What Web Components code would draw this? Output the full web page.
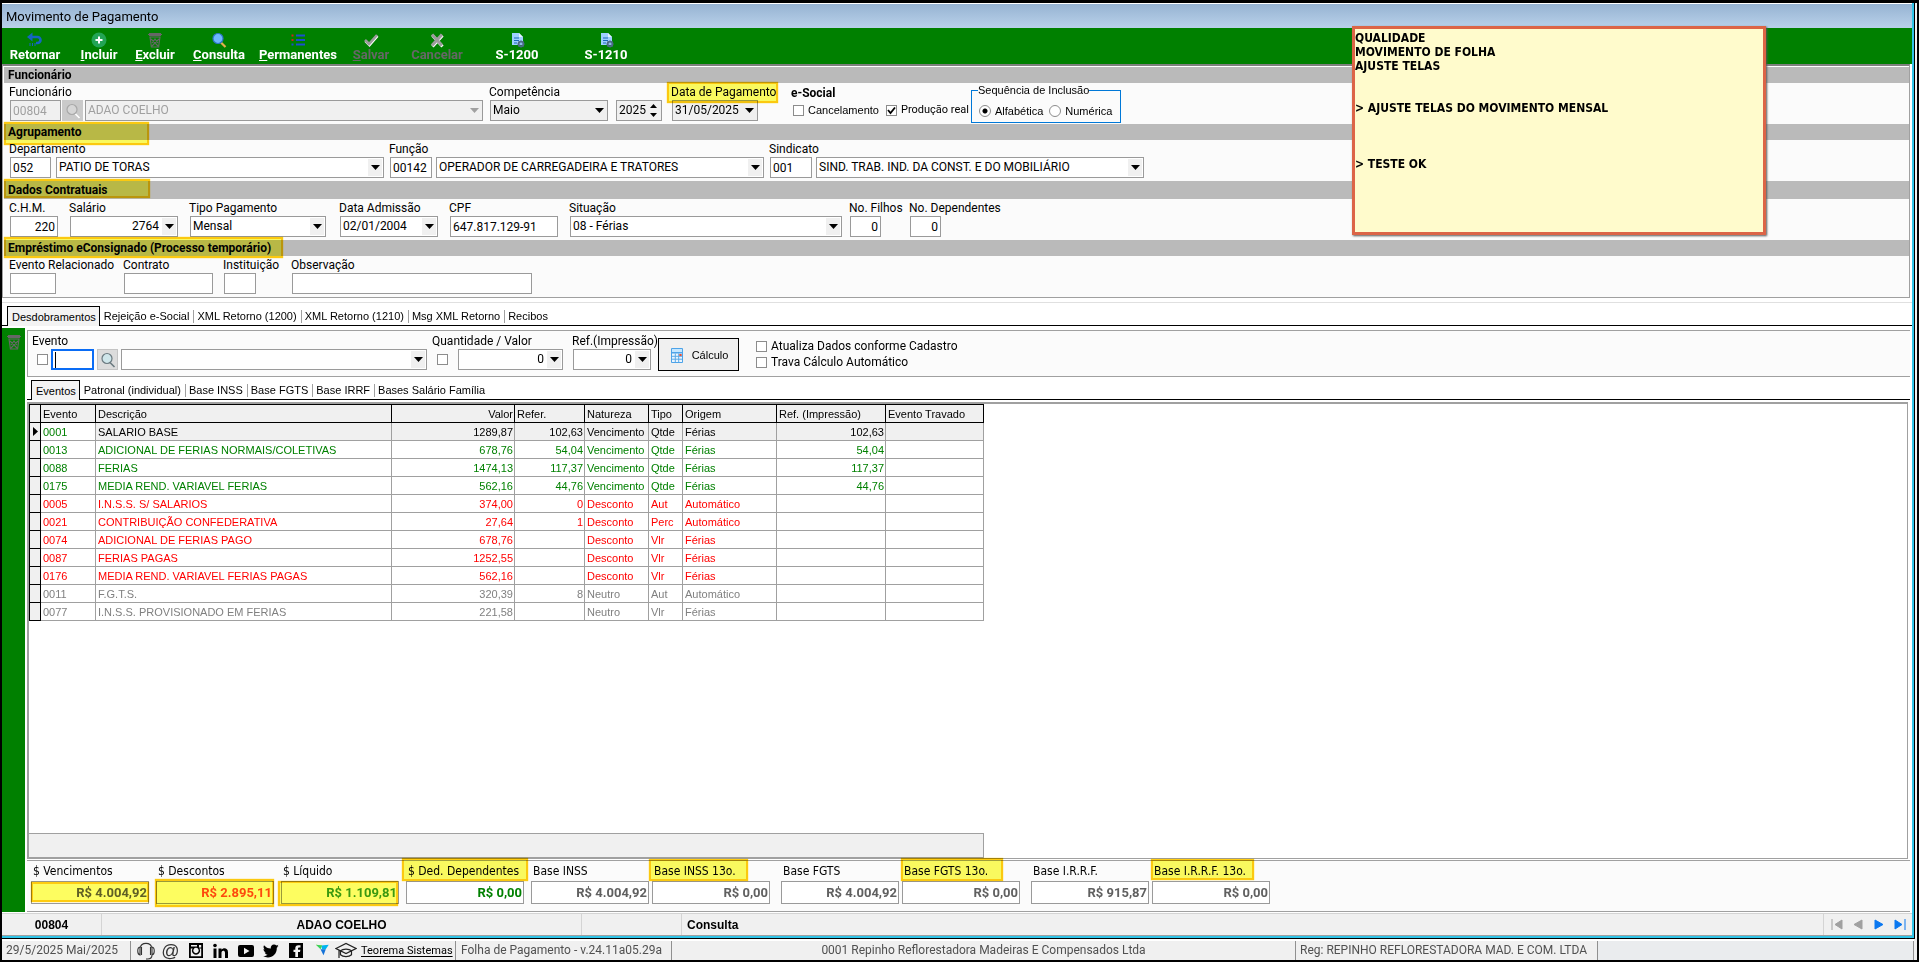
<!DOCTYPE html>
<html lang="pt-BR">
<head>
<meta charset="utf-8">
<title>Movimento de Pagamento</title>
<style>
html, body { margin: 0; height: 100%; }
body { font: 12px/14px Roboto, "Liberation Sans", sans-serif; color: #000; background: #000; }
</style>
</head>
<body>
<payroll-app></payroll-app>

<script>
const RESET = `
*, *::before, *::after { box-sizing: border-box; }
:host { box-sizing: border-box; }
:host([hidden]) { display: none; }
button, input, select { font: inherit; color: inherit; margin: 0; border-radius: 0; }
input:focus, select:focus, button:focus { outline: none; }
`;
let nextId = 0;

const define = (name, render) => customElements.define(name, class extends HTMLElement {
  connectedCallback() {
    if (this.shadowRoot) return;
    const t = document.createElement('template');
    t.innerHTML = render(this);
    this.attachShadow({ mode: 'open' }).appendChild(t.content.cloneNode(true));
  }
});

/* ---------- icons ---------- */
const TRASH = '<g fill="none" stroke="#666" stroke-width="1.1"><path d="M1 2.500h14M3 5h10l-1.400 10H4.400zM4 7l7 7M12 7l-7 7M5 11l3-4 3 4"/></g><path d="M2 1h12v3H2z" fill="#666"/>';
const DOC = '<path d="M3 1h7l4 4v8H3z" fill="#9fd0ff"/><path d="M10 1v4h4z" fill="#e4f3ff"/><path d="M5 6h5M5 8.500h5M5 11h3" stroke="#1c68b8" stroke-width="1.200"/><circle cx="12" cy="12" r="2.500" fill="none" stroke="#4c6a86" stroke-width="1.600"/><path d="M12 8.500v7M8.500 12h7M9.600 9.600l4.800 4.800M14.400 9.600l-4.800 4.800" stroke="#4c6a86" stroke-width="1"/><circle cx="12" cy="12" r="1.100" fill="#9fd0ff"/>';
const ICONS = {
  back: '<path d="M3 5h7.500a3 3 0 0 1 0 6H9" fill="none" stroke="#1565c0" stroke-width="2.600"/><path d="M0 5l5.500-4.500v9z" fill="#1565c0"/><path d="M3 11v3M5.500 11v3M8 11v3" stroke="#1565c0" stroke-width="1"/>',
  add: '<circle cx="8" cy="8" r="7.500" fill="#23a455"/><path d="M8 4.500v7M4.500 8h7" stroke="#fff" stroke-width="2"/>',
  trash: TRASH,
  find: '<path d="M10 10.500l4.500 4.500" stroke="#e3b04b" stroke-width="2.200"/><circle cx="7" cy="6.500" r="5" fill="#6db8ff" stroke="#2e77c9" stroke-width="1.200"/>',
  list: '<path d="M6 3.500h9M6 8h9M6 12.500h9" stroke="#1a4fd0" stroke-width="2"/><path d="M1.500 2.500h2v2h-2zM1.500 7h2v2h-2z" fill="#d32020"/><path d="M1.500 11.500h2v2h-2z" fill="#1a4fd0"/>',
  check: '<path d="M2.500 9l4 4 8-9" fill="none" stroke="#fff" stroke-width="2.600"/><path d="M2 8l4 4 8-9" fill="none" stroke="#9c9c9c" stroke-width="2.600"/>',
  cross: '<path d="M3.500 3.500l10 11M13.500 3.500l-10 11" stroke="#fff" stroke-width="3"/><path d="M3 2.500l10 11M13 2.500l-10 11" stroke="#9c9c9c" stroke-width="3.200"/>',
  doc: DOC,
  lens: '<path d="M10 10.500l4.500 4.500" stroke="#6b7a80" stroke-width="1.600"/><circle cx="7" cy="6.500" r="5" fill="#cfe6ea" stroke="#6b7a80" stroke-width="1.200"/>',
  lensoff: '<path d="M10 10.500l4.500 4.500" stroke="#fff" stroke-width="1.600"/><circle cx="7" cy="6.500" r="5" fill="#d6d6d6" stroke="#a8a8a8" stroke-width="1.200"/>',
  calc: '<rect x="2" y="1" width="12" height="15" rx="1" fill="#4da3e8"/><path d="M3 2h10v3H3z" fill="#c4e6ff"/><path d="M3 6.500h10V15H3z" fill="#eaf5ff"/><path d="M3 9.300h10M3 12.200h10M6.300 6.500V15M9.700 6.500V15" stroke="#5aa9e6"/><path d="M10.300 7h2.400v2h-2.400z" fill="#e0503a"/>',
  phones: '<g fill="none" stroke="#333" stroke-width="1.100"><path d="M3.500 5.500C4 0 14 0 14.500 5.500"/><path d="M3 5c-3 .5-3 7.500 0 8zM15 5c3 .5 3 7.500 0 8zM4.500 5v8M13.500 5v8M15 13c0 2.500-1.500 4-4.500 4H9"/></g>',
  insta: '<path fill-rule="evenodd" d="M2 1h14v15H2zM4 3v1.500h6V3zM12 3v2.500h2.200V3zM3.800 6.500v7.700h10.400V6.500h-1.800a4 4 0 1 1-6.800 0zM9 5.800a2.700 2.700 0 1 0 .01 0z"/>',
  linked: '<path d="M1.500 6.500h3V16h-3zM6.500 6.500h3v1.300c1.600-2.300 6.500-2.100 6.500 2.400V16h-3v-5.200c0-2.800-3.500-2.600-3.500 0V16h-3z"/><circle cx="3" cy="3.500" r="1.800"/>',
  tube: '<path fill-rule="evenodd" d="M3 3h12q2 0 2 2v8q0 2-2 2H3q-2 0-2-2V5q0-2 2-2zM7 5.800v6.400l5.500-3.200z"/>',
  bird: '<path d="M16.500 4.200l-1.700 1.600c.2 6-4 9.700-8.800 9.700-1.800 0-3.500-.5-4.800-1.400 1.700.1 3.200-.3 4.400-1.300-1.500-.1-2.500-1-2.900-2.200h1.400C2.500 10.100 1.500 8.800 1.500 7.100l1.400.4C1.600 6.400 1.100 4.700 2 3.200c1.700 2 4 3.300 6.800 3.400C8.300 4.200 10 2.500 12 2.500c1 0 1.800.4 2.400 1l2-.8-1.200 1.700z"/>',
  face: '<path fill-rule="evenodd" d="M2 1h14v15H2zM8.300 15h2.700v-5h2l.4-2.300H11V6.600q0-1 1-1h1.500V3.300h-2.200q-3 0-3 3v1.400H6.500V10h1.800z"/>',
  teo: '<g transform="translate(4 2) scale(.75)"><path d="M0 1l8 1-2 4z" fill="#c4e800"/><path d="M7 2l10-1-4 6-5 0z" fill="#00b4f0"/><path d="M6 7h7l-3 8z" fill="#1673d8"/><path d="M0 1l6 6 2-5z" fill="#38d060"/></g>',
  cap: '<g fill="none" stroke="#222" stroke-width="1.200"><path d="M1 6.500L11 1.500l10 5-10 5zM4 8v8M5.500 8.800c2.500-2.300 8.500-2.300 11 0v4c-2.500 2.400-8.500 2.400-11 0z"/></g>'
};
define('ui-icon', h => {
  const n = h.getAttribute('name'), w = n === 'cap' ? 22 : (['phones','insta','linked','tube','bird','face','teo'].includes(n) ? 18 : 16);
  return `<style>:host{display:inline-block;line-height:0} svg{display:block}</style>
  <svg width="${w}" height="${w === 16 ? 16 : 18}" viewBox="0 0 ${w} ${w === 16 ? 16 : 18}" aria-hidden="true">${ICONS[n]}</svg>`;
});

/* ---------- translucent marker laid over a heading or value ---------- */
const mark = spec => {
  if (!spec) return '';
  const [l, t, w, h] = spec.split(' ');
  return `<i class="mark" style="left:${l}px;top:${t}px;width:${w}px;height:${h}px"></i>`;
};
const MARK_CSS = `:host{position:relative}.mark{position:absolute;background:#fdfd60;border:2px solid #ffcc10;box-shadow:0 0 1px #ffcc10;mix-blend-mode:multiply;pointer-events:none}`;

/* ---------- toolbar button ---------- */
define('tool-button', h => `<style>${RESET}
:host{display:block}
button{width:100%;height:36px;padding:4px 0 0;border:0;background:none;color:#fff;font-size:13px;font-weight:700;line-height:14px;display:flex;flex-direction:column;align-items:center;white-space:nowrap}
button:disabled{color:#666}
u{text-underline-offset:2px}
</style><button type="button" ${h.hasAttribute('disabled') ? 'disabled' : ''}><ui-icon name="${h.getAttribute('icon')}"></ui-icon><span><slot></slot></span></button>`);

/* ---------- section: grey heading and body ---------- */
define('form-section', h => `<style>${RESET}${MARK_CSS}
:host{display:block}
h2{margin:0;padding-left:4px;height:var(--band,16px);line-height:var(--band,16px);background:#bababa;font-size:12px;font-weight:700}
.row{display:grid;grid-template-columns:var(--cols);height:41px;padding-left:5px;background:#fbfbfb;align-items:start}
</style><h2>${h.getAttribute('heading')}</h2><div class="row"><slot></slot></div>${mark(h.getAttribute('mark'))}`);

/* ---------- labelled field made of one or more controls ---------- */
const CONTROL_CSS = `
input[type=text],input[type=number],.combo,.spin{height:21px;border:1px solid #9a9a9a;background:#fff;padding:0 2px;line-height:19px}
input.right{text-align:right}
.combo,.spin{display:grid;padding:0;grid-template-columns:1fr 16px;align-items:stretch}
.combo select,.spin input[type=number]{grid-area:1/1/2/3;appearance:none;-webkit-appearance:none;width:100%;height:19px;border:0;background:transparent;padding:0 18px 0 2px;line-height:19px;opacity:1}
.spin input[type=number]{padding-right:12px}
.combo.right select{text-align-last:right}
.combo .arrow,.spin .arrow{grid-area:1/2;margin:1px;background:#f0f0f0;pointer-events:none;display:flex;align-items:center;justify-content:center}
.off,.off.combo,input.off{background:#f0f0f0 !important;color:#a0a0a0}
.off select{color:#a0a0a0}
.combo.grey,.spin.grey{background:#f0f0f0}
.spin input{-moz-appearance:textfield}
.spin input::-webkit-inner-spin-button{appearance:none;-webkit-appearance:none}
.find{width:21px;height:21px;padding:0;border:1px solid #c4c4c4;background:#dcdcdc;display:flex;align-items:center;justify-content:center}
.find:disabled{background:#cacaca;border-color:#cacaca}
input.focus{border:2px solid #0a6cf5 !important;background:linear-gradient(#000,#000) 2px 1px/1px 16px no-repeat #fff !important}
`;
const CHECK_CSS = `
input[type=checkbox]{appearance:none;-webkit-appearance:none;flex:none;width:11px;height:11px;border:1px solid #8c8c8c;background:#fff}
input[type=checkbox]:checked{background:#fff url('data:image/svg+xml,<svg xmlns="http://www.w3.org/2000/svg" viewBox="0 0 9 9"><path d="M1 4l2.500 3L8 1.500" fill="none" stroke="black" stroke-width="1.800"/></svg>') center/9px 9px no-repeat}
`;
define('form-field', h => {
  const id = 'c' + (++nextId), label = h.getAttribute('label');
  const parts = h.getAttribute('parts').split(';').map(p => p.split(':'));
  let main = false;
  const html = parts.map(([kind, w, gap, value = '']) => {
    const [type, ...mods] = kind.split('.');
    const cls = mods.join(' '), off = mods.includes('off');
    let ident = `aria-label="${label}"`;
    if (!main && !['find', 'check'].includes(type)) { ident = `id="${id}"`; main = true; }
    const st = `style="width:${w}px;margin-right:${gap || 0}px"`;
    if (type === 'text') return `<input type="text" class="${cls}" ${ident} ${st} value="${value}" ${off ? 'disabled' : ''}>`;
    if (type === 'check') return `<input type="checkbox" aria-label="${label}" style="margin-right:${gap}px">`;
    if (type === 'find') return `<button type="button" class="find" aria-label="Pesquisar" style="margin-right:${gap}px" ${off ? 'disabled' : ''}><ui-icon name="${off ? 'lensoff' : 'lens'}"></ui-icon></button>`;
    if (type === 'spin') return `<span class="spin grey" ${st}><input type="number" ${ident} value="${value}"><span class="arrow"><svg width="7" height="13" viewBox="0 0 7 13"><path d="M0 4l3.500-4L7 4zM0 9l3.500 4L7 9z"/></svg></span></span>`;
    return `<span class="combo ${cls}" ${st}><select ${ident} ${off ? 'disabled' : ''}><option>${value}</option></select><span class="arrow"><svg width="9" height="5" viewBox="0 0 9 5"><path d="M0 0h9L4.500 5z" fill="${off ? '#a0a0a0' : '#000'}"/></svg></span></span>`;
  }).join('');
  return `<style>${RESET}${MARK_CSS}${CONTROL_CSS}${CHECK_CSS}
:host{display:block}
label{display:block;height:17px;line-height:18px;white-space:nowrap}
.line{display:flex;align-items:center;padding-left:1px}
:host([indent]) .line{padding-left:5px}
</style><label for="${id}">${label}</label><div class="line">${html}</div>${mark(h.getAttribute('mark'))}`;
});

define('check-box', h => `<style>${RESET}${CHECK_CSS}
:host{display:inline-block;white-space:nowrap}
label{display:flex;align-items:center;gap:4px;line-height:12px}
</style><label><input type="checkbox" ${h.hasAttribute('checked') ? 'checked' : ''}><slot></slot></label>`);

define('order-group', () => `<style>${RESET}
:host{display:block;font:11px/12px "Liberation Sans",Arial,sans-serif}
fieldset{margin:1px 0 0;padding:0 0 0 7px;width:150px;height:39px;border:1px solid #0078d7}
legend{margin-left:-1px;padding:0;line-height:12px}
.line{display:flex;gap:6px;padding-top:9px}
label{display:flex;align-items:center;gap:4px}
input{appearance:none;-webkit-appearance:none;width:12px;height:12px;border:1px solid #8c8c8c;border-radius:50%;background:#fff}
input:checked{background:radial-gradient(circle,#000 0 2px,#fff 3px)}
</style><fieldset><legend>Sequência de Inclusão</legend><div class="line">
<label><input type="radio" name="ord" checked>Alfabética</label><label><input type="radio" name="ord">Numérica</label></div></fieldset>`);

/* ---------- tab strip ---------- */
define('tab-strip', h => `<style>${RESET}
:host{display:block;font:11px/18px "Liberation Sans",Arial,sans-serif;background:#fff}
nav{display:flex;height:20px;padding-left:var(--inset,4px);border-bottom:1px solid #000}
button{height:19px;border:0;background:none;padding:0 4px;white-space:nowrap;line-height:20px;position:relative}
button[aria-selected=true]{height:20px;background:#f3f3f3;border:1px solid #000;border-bottom:0;padding:0 3px 0 4px}
button+button:not(:nth-child(2))::before{content:"";position:absolute;left:0;top:4px;height:13px;border-left:1px solid #a0a0a0}
</style><nav role="tablist">${h.getAttribute('tabs').split('|').map((t, i) => `<button type="button" role="tab" aria-selected="${i === 0}">${t}</button>`).join('')}</nav>`);

/* ---------- events grid ---------- */
const ROWS = [
  ['k','0001','SALARIO BASE','1289,87','102,63','Vencimento','Qtde','Férias','102,63'],
  ['g','0013','ADICIONAL DE FERIAS NORMAIS/COLETIVAS','678,76','54,04','Vencimento','Qtde','Férias','54,04'],
  ['g','0088','FERIAS','1474,13','117,37','Vencimento','Qtde','Férias','117,37'],
  ['g','0175','MEDIA REND. VARIAVEL FERIAS','562,16','44,76','Vencimento','Qtde','Férias','44,76'],
  ['r','0005','I.N.S.S. S/ SALARIOS','374,00','0','Desconto','Aut','Automático',''],
  ['r','0021','CONTRIBUIÇÃO CONFEDERATIVA','27,64','1','Desconto','Perc','Automático',''],
  ['r','0074','ADICIONAL DE FERIAS PAGO','678,76','','Desconto','Vlr','Férias',''],
  ['r','0087','FERIAS PAGAS','1252,55','','Desconto','Vlr','Férias',''],
  ['r','0176','MEDIA REND. VARIAVEL FERIAS PAGAS','562,16','','Desconto','Vlr','Férias',''],
  ['n','0011','F.G.T.S.','320,39','8','Neutro','Aut','Automático',''],
  ['n','0077','I.N.S.S. PROVISIONADO EM FERIAS','221,58','','Neutro','Vlr','Férias','']
];
define('events-grid', () => `<style>${RESET}
:host{flex:1;display:flex;flex-direction:column;justify-content:space-between;background:#fff;border:1px solid #a0a0a0;border-width:2px 1px 1px 2px;margin-right:2px;font:11px/16px "Liberation Sans",Arial,sans-serif}
table{border-collapse:separate;border-spacing:0;table-layout:fixed;width:955px}
th{font-weight:400;text-align:left;height:19px;padding:0 3px 0 2px;background:#f0f0f0;border:solid #000;border-width:1px 1px 1px 0;white-space:nowrap}
td{height:18px;padding:0 1px 0 2px;border:solid #a0a0a0;border-width:0 1px 1px 0;white-space:nowrap}
th:first-child,td:first-child{background:#f0f0f0;border-color:#000;border-left:1px solid #000;padding:0}
th.num,td.num{text-align:right;padding-right:1px}
tr.k td{background:#f0f0f0} tr.k td:nth-child(2){background:#fff;color:#008000}
tr.g{color:#008000} tr.r{color:#f00} tr.n{color:#808080}
svg{display:block;margin-left:3px}
.foot{height:25px;width:955px;background:#f0f0f0;border:1px solid #a0a0a0;border-left:0}
</style>
<table><colgroup>${[12,55,296,123,70,64,34,94,109,98].map(w => `<col style="width:${w}px">`).join('')}</colgroup>
<thead><tr><th></th><th>Evento</th><th>Descrição</th><th class="num">Valor</th><th>Refer.</th><th>Natureza</th><th>Tipo</th><th>Origem</th><th>Ref. (Impressão)</th><th>Evento Travado</th></tr></thead>
<tbody>${ROWS.map(([c, ...v]) => `<tr class="${c}"><td>${c === 'k' ? '<svg width="5" height="9" viewBox="0 0 5 9"><path d="M0 0l5 4.500L0 9z"/></svg>' : ''}</td>${v.map((x, i) => `<td${[2, 3, 7].includes(i) ? ' class="num"' : ''}>${x}</td>`).join('')}<td></td></tr>`).join('')}</tbody></table>
<div class="foot"></div>`);

/* ---------- total: caption over a read-only value ---------- */
define('total-field', h => {
  const id = 't' + (++nextId);
  return `<style>${RESET}${MARK_CSS}
:host{display:block}
label{display:block;height:20px;padding-left:2px;font:12px/20px "DejaVu Sans Condensed","DejaVu Sans",sans-serif;white-space:nowrap}
input{display:block;width:118px;height:23px;border:1px solid #9a9a9a;background:#fff;text-align:right;padding:0 1px;font-size:13px;font-weight:700;color:var(--ink,#606060)}
</style><label for="${id}">${h.getAttribute('label')}</label><input id="${id}" type="text" readonly value="${h.getAttribute('value')}">${mark(h.getAttribute('mark'))}`;
});

define('sticky-note', () => `<style>${RESET}
:host{display:block;position:absolute;top:23px;right:151px;width:414px;height:209px;background:#fffbcc;border:3px solid #dc6446;box-shadow:1px 1px 2px #555;font:bold 12px/14px "DejaVu Sans Condensed","DejaVu Sans",sans-serif;white-space:pre-line}
p{margin:2px 0 0}
</style><p><slot></slot></p>`);

define('record-bar', () => `<style>${RESET}
:host{display:flex;height:23px;margin-top:1px;background:#f0f0f0;border-top:1px solid #d4d4d4;border-bottom:1px solid #a0a0a0;font:bold 12px/22px "Liberation Sans",Arial,sans-serif}
span{text-align:center;border-right:1px solid #d4d4d4}
.a,.c{width:100px}.b{width:480px}.d{flex:1;text-align:left;padding-left:5px}
div{display:flex;padding:0 2px}
button{width:21px;border:0;background:none;padding:0;display:flex;align-items:center;justify-content:center}
</style><span class="a">00804</span><span class="b">ADAO COELHO</span><span class="c"></span><span class="d">Consulta</span>
<div>${[['Primeiro','M1 0v11M11 1v9L4 5.500z','#a0a0a0'],['Anterior','M10 1v9L2 5.500z','#a0a0a0'],['Próximo','M2 1v9l8-4.500z','#0a78f0'],['Último','M11 0v11M1 1v9l7-4.500z','#0a78f0']].map(([n, d, c]) => `<button type="button" aria-label="${n}"><svg width="12" height="11" viewBox="0 0 12 11"><path d="${d}" fill="${c}" stroke="${c}"/></svg></button>`).join('')}</div>`);

define('app-status', () => `<style>${RESET}
:host{display:flex;height:21px;margin-right:3px;background:#f0f0f0;border-top:2px solid #fff;line-height:19px;color:#505050;white-space:nowrap}
:host>*,.date,.links,.ver,.firm,.reg{border-right:1px solid #909090}
.date{width:129px;padding-left:4px}
.links{width:325px;padding-left:2px;display:flex;align-items:center;overflow:hidden;color:#000}
.links a{color:#000;text-decoration:none;width:25px;display:flex;justify-content:center;fill:#000}
.links a.at{font:18px/18px "Liberation Sans",sans-serif;color:#333}
.links a.name{width:auto;margin-left:3px;font-size:11px;text-decoration:underline;text-underline-offset:2px}
.ver{width:216px;padding-left:5px}
.firm{flex:0 1 624px;text-align:center}
.reg{width:302px;padding-left:4px}
.rest{flex:1;background:#eaecee}
</style>
<span class="date">29/5/2025 Mai/2025</span>
<span class="links"><a href="#" aria-label="Suporte"><ui-icon name="phones"></ui-icon></a><a href="#" class="at">@</a><a href="#" aria-label="Instagram"><ui-icon name="insta"></ui-icon></a><a href="#" aria-label="LinkedIn"><ui-icon name="linked"></ui-icon></a><a href="#" aria-label="YouTube"><ui-icon name="tube"></ui-icon></a><a href="#" aria-label="Twitter"><ui-icon name="bird"></ui-icon></a><a href="#" aria-label="Facebook"><ui-icon name="face"></ui-icon></a><a href="#" aria-label="Teorema"><ui-icon name="teo"></ui-icon></a><a href="#" aria-label="Cursos"><ui-icon name="cap"></ui-icon></a><a href="#" class="name">Teorema Sistemas</a></span>
<span class="ver">Folha de Pagamento - v.24.11a05.29a</span>
<span class="firm">0001 Repinho Reflorestadora Madeiras E Compensados Ltda</span>
<span class="reg">Reg: REPINHO REFLORESTADORA MAD. E COM. LTDA</span><span class="rest"></span>`);

/* ---------- whole screen ---------- */
define('payroll-app', () => `<style>${RESET}
:host{display:flex;flex-direction:column;min-height:100vh;background:#f0f0f0;border:solid #000;border-width:3px 2px 2px 2px;position:relative}
.win{flex:1;display:flex;flex-direction:column;margin-right:2px;border:solid #000;border-width:0 1px 1px 0}
.in{flex:1;display:flex;flex-direction:column;border:solid #30c4e8;border-width:0 2px 2px 0;background:#fff}
h1{margin:0;height:25px;border-top:1px solid #fff;padding-left:4px;font-size:13px;font-weight:400;line-height:26px;background:linear-gradient(#96b3d2,#b9d1ea)}
.tools{display:flex;height:36px;background:#008000}
.form{border-top:2px solid #808080;margin:0 2px 0 0;padding:1px 0 0 1px;border-right:1px solid #a0a0a0;border-left:1px solid #a0a0a0;border-bottom:1px solid #a0a0a0;background:#fff}
.social{display:block;padding-top:2px}
.social b{display:block;line-height:14px;height:16px;padding-top:1px}
.checks{display:flex;gap:7px;padding:3px 0 0 2px;font:11px/12px "Liberation Sans",Arial,sans-serif}
.checks .ui{font:11px/12px Roboto,sans-serif}
.gap{height:8px;border-top:1px solid #e0e0e0;margin-top:4px;margin-bottom:-4px}
.work{flex:1;display:flex;margin-top:2px}
.side{width:23px;background:#008000;padding:6px 0 0 4px}
.side button{border:0;background:none;padding:0}
.pane{flex:1;display:flex;flex-direction:column;margin:2px 2px 0 2px}
.entry{display:grid;grid-template-columns:400px 140px 86px 98px 1fr;height:47px;padding:1px 0 0 4px;border:1px solid #a0a0a0;border-right:0;background:#fbfbfb}
.calc{width:81px;height:33px;margin-top:6px;border:1px solid #000;background:#f0f0f0;display:flex;align-items:center;justify-content:center;gap:7px;font:11px/14px "Liberation Sans",Arial,sans-serif}
.opts{display:flex;flex-direction:column;gap:4px;padding-top:8px}
.totals{display:grid;grid-template-columns:125px 125px 125px 125px 121px 129px 121px 129px 121px 1fr;height:52px;margin-top:1px;padding-left:4px;border:solid #a0a0a0;border-width:1px 0;background:#fbfbfb}
</style>
<main class="win"><div class="in">
<h1>Movimento de Pagamento</h1>
<div class="tools">
<tool-button icon="back" style="width:66px">Retornar</tool-button>
<tool-button icon="add" style="width:62px"><u>I</u>ncluir</tool-button>
<tool-button icon="trash" style="width:50px"><u>E</u>xcluir</tool-button>
<tool-button icon="find" style="width:78px"><u>C</u>onsulta</tool-button>
<tool-button icon="list" style="width:80px"><u>P</u>ermanentes</tool-button>
<tool-button icon="check" disabled style="width:66px"><u>S</u>alvar</tool-button>
<tool-button icon="cross" disabled style="width:66px">Cancelar</tool-button>
<tool-button icon="doc" style="width:94px">S-1200</tool-button>
<tool-button icon="doc" style="width:84px">S-1210</tool-button>
</div>
<div class="form">
<form-section heading="Funcionário" style="--cols:480px 126px 56px 120px 180px 1fr">
<form-field label="Funcionário" parts="text.off:51:1:00804;find.off::2;combo.off:398::ADAO COELHO"></form-field>
<form-field label="Competência" parts="combo.grey:119:7:Maio"></form-field>
<form-field label="&nbsp;" parts="spin:46::2025"></form-field>
<form-field label="Data de Pagamento" mark="-4 -1 111 21" parts="combo.grey:86::31/05/2025"></form-field>
<div class="social"><b>e-Social</b><div class="checks"><check-box>Cancelamento</check-box><check-box checked class="ui">Produção real</check-box></div></div>
<order-group></order-group>
</form-section>
<form-section heading="Agrupamento" mark="0 -2 145 23" style="--cols:380px 380px 1fr">
<form-field label="Departamento" parts="text:41:5:052;combo:328::PATIO DE TORAS"></form-field>
<form-field label="Função" parts="text:42:4:00142;combo:328::OPERADOR DE CARREGADEIRA E TRATORES"></form-field>
<form-field label="Sindicato" parts="text:42:4:001;combo:328::SIND. TRAB. IND. DA CONST. E DO MOBILIÁRIO"></form-field>
</form-section>
<form-section heading="Dados Contratuais" mark="0 -2 146 19" style="--band:18px;--cols:60px 120px 150px 110px 120px 280px 60px 1fr">
<form-field label="C.H.M." parts="text.right:48::220"></form-field>
<form-field label="Salário" parts="combo.right:108::2764"></form-field>
<form-field label="Tipo Pagamento" parts="combo:136::Mensal"></form-field>
<form-field label="Data Admissão" parts="combo:98::02/01/2004"></form-field>
<form-field label="CPF" parts="text:108::647.817.129-91"></form-field>
<form-field label="Situação" parts="combo:272::08 - Férias"></form-field>
<form-field label="No. Filhos" parts="text.right:31::0"></form-field>
<form-field label="No. Dependentes" parts="text.right:31::0"></form-field>
</form-section>
<form-section heading="Empréstimo eConsignado (Processo temporário)" mark="0 -3 279 21" style="--cols:114px 100px 68px 1fr">
<form-field label="Evento Relacionado" parts="text:46"></form-field>
<form-field label="Contrato" parts="text:89"></form-field>
<form-field label="Instituição" parts="text:32"></form-field>
<form-field label="Observação" parts="text:240"></form-field>
</form-section>
</div>
<div class="gap"></div>
<tab-strip tabs="Desdobramentos|Rejeição e-Social|XML Retorno (1200)|XML Retorno (1210)|Msg XML Retorno|Recibos" style="--inset:5px"></tab-strip>
<div class="work">
<div class="side"><button type="button" aria-label="Excluir"><ui-icon name="trash"></ui-icon></button></div>
<div class="pane">
<div class="entry">
<form-field indent label="Evento" parts="check::3;text.focus:43:3;find::3;combo:306"></form-field>
<form-field indent label="Quantidade / Valor" parts="check::10;combo.right:105::0"></form-field>
<form-field label="Ref.(Impressão)" parts="combo.right:78::0"></form-field>
<button type="button" class="calc"><ui-icon name="calc"></ui-icon>Cálculo</button>
<div class="opts"><check-box>Atualiza Dados conforme Cadastro</check-box><check-box>Trava Cálculo Automático</check-box></div>
</div>
<tab-strip tabs="Eventos|Patronal (individual)|Base INSS|Base FGTS|Base IRRF|Bases Salário Família" style="--inset:4px;margin:3px 0 2px"></tab-strip>
<events-grid></events-grid>
<div class="totals">
<total-field label="$ Vencimentos" value="R$ 4.004,92" mark="0 21 118 20"></total-field>
<total-field label="$ Descontos" value="R$ 2.895,11" mark="-1 18 119 28" style="--ink:#ff4a20"></total-field>
<total-field label="$ Líquido" value="R$ 1.109,81" mark="-3 20 120 25" style="--ink:#3a9a28"></total-field>
<total-field label="$ Ded. Dependentes" value="R$ 0,00" mark="-4 -3 126 23" style="--ink:#008000"></total-field>
<total-field label="Base INSS" value="R$ 4.004,92"></total-field>
<total-field label="Base INSS 13o." value="R$ 0,00" mark="-3 -2 99 22"></total-field>
<total-field label="Base FGTS" value="R$ 4.004,92"></total-field>
<total-field label="Base FGTS 13o." value="R$ 0,00" mark="-1 -3 102 23"></total-field>
<total-field label="Base I.R.R.F." value="R$ 915,87"></total-field>
<total-field label="Base I.R.R.F. 13o." value="R$ 0,00" mark="-1 -2 103 21"></total-field>
</div>
</div>
</div>
<record-bar></record-bar>
</div></main>
<app-status></app-status>
<sticky-note>QUALIDADE
MOVIMENTO DE FOLHA
AJUSTE TELAS


&gt; AJUSTE TELAS DO MOVIMENTO MENSAL



&gt; TESTE OK</sticky-note>`);
</script>
</body>
</html>
